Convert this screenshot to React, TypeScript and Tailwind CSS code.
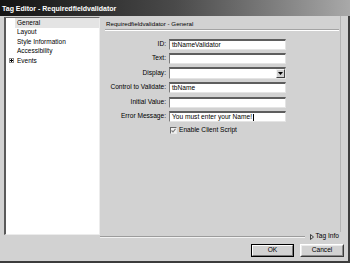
import React from "react";

const font = { fontFamily: '"Liberation Sans", Arial, sans-serif' };

function Field({ label, value, dropdown, tall, cursor }: { label: string; value?: string; dropdown?: boolean; tall?: boolean; cursor?: boolean }) {
  return (
    <div className="flex items-center">
      <div className="w-[61px] text-right text-[6.6px] leading-none text-black whitespace-nowrap">{label}</div>
      <div
        className={`ml-[3px] w-[117px] ${tall ? "h-[12px]" : "h-[11px]"} bg-white border border-t-2 border-t-[#5e5e5e] border-l-[#7c7c7c] border-r-[#e4e4e4] border-b-[#e4e4e4] flex items-center`}
      >
        <span className="pl-[2px] text-[6.6px] leading-none text-black whitespace-nowrap flex-1">
          {value}
          {cursor && <span className="inline-block w-[1px] h-[7px] bg-black align-middle ml-[1px]" />}
        </span>
        {dropdown && (
          <div className="w-[9px] h-[9px] mr-[0px] bg-[#d2d2d2] border border-t-[#f4f4f4] border-l-[#f4f4f4] border-r-[#404040] border-b-[#404040] flex items-center justify-center">
            <svg width="5" height="3" viewBox="0 0 5 3">
              <polygon points="0,0 5,0 2.5,3" fill="#000" />
            </svg>
          </div>
        )}
      </div>
    </div>
  );
}

export default function App() {
  return (
    <div className="w-[350px] h-[263px] bg-[#d2d2d2] flex flex-col overflow-hidden" style={font}>
      <div className="h-[16px] bg-gradient-to-r from-[#141414] via-[#4a4a4a] to-[#a9a9a9] flex items-center pl-[2px]">
        <span className="text-white font-bold text-[7px] leading-none whitespace-nowrap">Tag Editor - Requiredfieldvalidator</span>
      </div>
      <div className="flex-1 flex flex-col border-r-2 border-b-2 border-[#3c3c3c]">
        <div className="h-[225px] flex pl-[4px]">
          <div className="mt-[1px] w-[96px] h-[218px] bg-white border-l-2 border-t border-l-[#5a5a5a] border-t-[#6a6a6a] border-r border-b border-r-[#ececec] border-b-[#ececec] pt-[0px] text-[6.5px] leading-none text-black">
            <div className="ml-[9px] h-[9.5px] bg-[#e4e4e4] flex items-center pl-[2px]">General</div>
            <div className="ml-[9px] h-[9.5px] flex items-center pl-[2px]">Layout</div>
            <div className="ml-[9px] h-[9.5px] flex items-center pl-[2px]">Style Information</div>
            <div className="ml-[9px] h-[9.5px] flex items-center pl-[2px]">Accessibility</div>
            <div className="h-[9.5px] flex items-center pl-[3px]">
              <div className="w-[5px] h-[5px] border border-[#8a8a8a] flex items-center justify-center relative">
                <div className="absolute w-[3px] h-[1px] bg-black" />
                <div className="absolute w-[1px] h-[3px] bg-black" />
              </div>
              <span className="ml-[3px]">Events</span>
            </div>
          </div>
          <div className="flex-1 flex flex-col">
            <div className="flex-1 mr-[7px] border-r border-r-[#b4b4b4] flex flex-col pl-[5px] pr-[1px]">
              <div className="h-[14px] border-b border-b-[#a4a4a4] flex items-center pl-[1px] pt-[3px]">
                <span className="text-[6.2px] leading-none text-black whitespace-nowrap">Requiredfieldvalidator - General</span>
              </div>
              <div className="h-[1px] bg-white" />
              <div className="mt-[8px] flex flex-col">
                <Field label="ID:" value="tbNameValidator" />
                <div className="h-[3px]" />
                <Field label="Text:" />
                <div className="h-[3px]" />
                <Field label="Display:" dropdown tall />
                <div className="h-[3px]" />
                <Field label="Control to Validate:" value="tbName" />
                <div className="h-[4px]" />
                <Field label="Initial Value:" />
                <div className="h-[3px]" />
                <Field label="Error Message:" value="You must enter your Name!" cursor />
                <div className="mt-[5px] flex items-center pl-[65px]">
                  <div className="w-[7px] h-[7px] bg-[#f2f2f2] border border-t-[#6a6a6a] border-l-[#6a6a6a] border-r-[#e8e8e8] border-b-[#e8e8e8] flex items-center justify-center">
                    <svg width="5" height="5" viewBox="0 0 5 5">
                      <polyline points="0.5,2.5 2,4 4.5,0.8" fill="none" stroke="#7a7a7a" strokeWidth="1.1" />
                    </svg>
                  </div>
                  <span className="ml-[2px] text-[6.6px] leading-none text-black whitespace-nowrap">Enable Client Script</span>
                </div>
              </div>
            </div>
            <div className="h-[9px] flex items-center pr-[9px]">
              <div className="flex-1 h-[2px] border-t border-t-[#9c9c9c] border-b border-b-[#f2f2f2]" />
              <svg className="ml-[5px]" width="4" height="6" viewBox="0 0 4 6">
                <polygon points="0.5,0.5 3.5,3 0.5,5.5" fill="none" stroke="#303030" strokeWidth="0.9" />
              </svg>
              <span className="ml-[2px] text-[6.6px] leading-none text-black whitespace-nowrap">Tag Info</span>
            </div>
          </div>
        </div>
        <div className="flex justify-end gap-[6px] pt-[3px] pr-[4px]">
          <div className="w-[43px] h-[13px] border border-black">
            <div className="w-full h-full border border-t-white border-l-white border-r-[#7a7a7a] border-b-[#7a7a7a] flex items-center justify-center text-[6.6px] leading-none text-black">OK</div>
          </div>
          <div className="w-[44px] h-[13px] border border-t-white border-l-white border-r-[#3a3a3a] border-b-[#3a3a3a]">
            <div className="w-full h-full border border-t-[#ececec] border-l-[#ececec] border-r-[#8a8a8a] border-b-[#8a8a8a] flex items-center justify-center text-[6.6px] leading-none text-black">Cancel</div>
          </div>
        </div>
      </div>
    </div>
  );
}
